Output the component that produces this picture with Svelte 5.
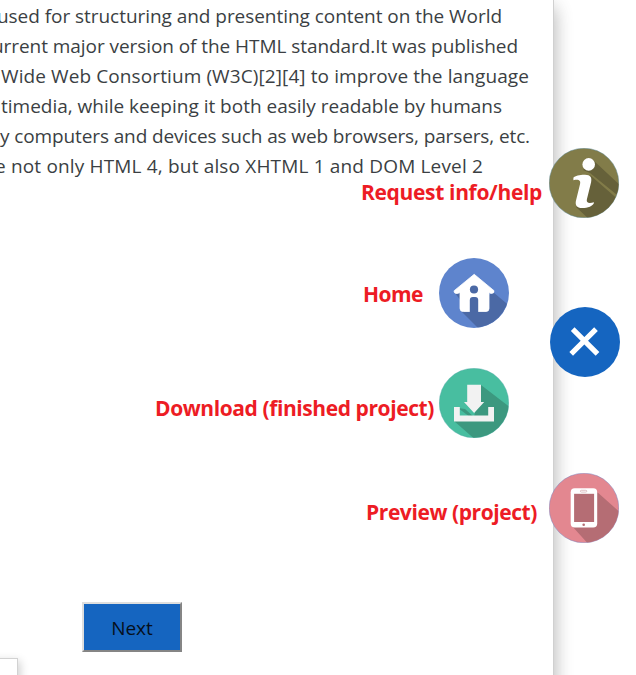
<script>
  const lines = [
    { text: 'used for structuring and presenting content on the World', start: -3, width: 505 },
    { text: 'urrent major version of the HTML standard.It was published', start: -8, width: 526 },
    { text: 'Wide Web Consortium (W3C)[2][4] to improve the language', start: 1, width: 528 },
    { text: 'timedia, while keeping it both easily readable by humans', start: 1, width: 501 },
    { text: 'y computers and devices such as web browsers, parsers, etc.', start: 0, width: 530 },
    { text: 'e not only HTML 4, but also XHTML 1 and DOM Level 2', start: -5, width: 488 }
  ];

  // Spreads the letters so that the run fills the given width.
  function fit(node, width) {
    const natural = node.getBoundingClientRect().width;
    node.style.letterSpacing = `${(width - natural) / node.textContent.length}px`;
  }
</script>

<main>
  <section class="panel">
    <div class="copy">
      {#each lines as line}
        <div class="line"><span style="margin-left: {line.start}px" use:fit={line.width}>{line.text}</span></div>
      {/each}
    </div>
    <button class="next">Next</button>
  </section>

  <div class="corner"></div>

  <nav>
    <div class="action info">
      <span class="label" use:fit={181}>Request info/help</span>
      <svg viewBox="0 0 70 70">
        <defs><clipPath id="disc"><circle cx="35" cy="35" r="34.7" /></clipPath></defs>
        <circle cx="35" cy="35" r="34.8" fill="#827c49" stroke="#5d8790" stroke-width=".5" />
        <g clip-path="url(#disc)" fill="#66613a">
          <path d="M44 12 72 38V50L41 25 34 22Z" />
          <path d="M41 27 72 54V74H43L27 59 36 52Z" />
        </g>
        <circle cx="39.7" cy="16.4" r="6.3" fill="#fff" />
        <path d="M24.4 29.8C26 27.4 31.5 26.6 36 26.7C41.6 26.9 43.1 29.5 42.1 34.2L37.9 51.3C37 55 40 56 45 54.3C44.7 58.4 37.8 60.2 33.3 60.1C27.4 60 26 57 27 52.5L31 36.2C32 32.6 30 31 24.4 32.2Z" fill="#fff" />
      </svg>
    </div>

    <div class="action home">
      <span class="label" use:fit={60}>Home</span>
      <svg viewBox="0 0 70 70">
        <circle cx="35" cy="35" r="35" fill="#5e84cd" />
        <g clip-path="url(#disc)" fill="#4b69a5">
          <path d="M16 35 22 35V43ZM54 34 74 51V74H43L22 53 50 52V37Z" />
        </g>
        <path d="M35.2 16.3 55 32.7Q55.5 35.6 52 35.4L50 34.5V50.5Q50 53.5 47 53.5H24.3Q21 53.5 21 50.4V34.5L18.5 35.5Q14.5 35.6 15.2 32.7Z" fill="#fff" stroke="#fff" stroke-width=".8" stroke-linejoin="round" />
        <circle cx="35" cy="31.5" r="4.1" fill="#4b69a5" />
        <path d="M30.8 54V42Q30.9 39 33.8 39H36.2Q39.2 39.1 39.2 42V54Z" fill="#4b69a5" />
      </svg>
    </div>

    <div class="action close">
      <svg viewBox="0 0 70 70">
        <circle cx="35" cy="35" r="35" fill="#1565c0" />
        <path d="M22.7 22.2 47.5 46.8M46 22.2 21.2 46.8" fill="none" stroke="#fff" stroke-width="5.2" />
      </svg>
    </div>

    <div class="action download">
      <span class="label" use:fit={279}>Download (finished project)</span>
      <svg viewBox="0 0 70 70">
        <circle cx="35" cy="35" r="34.8" fill="#48bea0" stroke="#58a8ac" stroke-width=".4" />
        <g clip-path="url(#disc)" fill="#3c987f">
          <path d="M42 17 72 40V74H39L15 53 31 49 19 40 26 41 35 49Z" />
        </g>
        <path d="M21 39V48H26L19 42Z" fill="#48bea0" />
        <path d="M28.2 16.8H42V34H45.2L35.1 45.1 25 34H28.2Z" fill="#f2f2f2" />
        <path d="M15 39H20.8V47.6H49.2V39H55V53.6H15Z" fill="#f2f2f2" />
      </svg>
    </div>

    <div class="action preview">
      <span class="label" use:fit={171}>Preview (project)</span>
      <svg viewBox="0 0 70 70">
        <circle cx="35" cy="35" r="34.8" fill="#e38790" stroke="#7a80bd" stroke-width=".5" />
        <g clip-path="url(#disc)" fill="#b56d74">
          <path d="M47 18 74 42V74H42L23 53 45 52Z" />
        </g>
        <rect x="21.7" y="15.2" width="26.5" height="39.3" rx="4" fill="#fff" />
        <rect x="25.1" y="20.8" width="20" height="28.2" fill="#b56d74" />
        <rect x="31.4" y="17.3" width="6.4" height="1.8" rx=".9" fill="#fff" stroke="#d3a9ad" stroke-width=".7" />
        <circle cx="34.7" cy="51.7" r="1.3" fill="#b56d74" />
      </svg>
    </div>
  </nav>
</main>

<style>
  :global(body) {
    margin: 0;
    background: #fff;
    overflow: hidden;
  }

  main {
    position: relative;
    height: 675px;
    overflow: hidden;
    font-family: 'Open Sans', 'Noto Sans', sans-serif;
  }

  .panel {
    box-sizing: border-box;
    width: 554px;
    height: 700px;
    padding-top: 1px;
    background: #fff;
    border-right: 1px solid #d0d0d0;
    box-shadow: 0 8px 17px rgba(0, 0, 0, 0.2), 0 6px 20px rgba(0, 0, 0, 0.13);
  }

  .copy {
    height: 601px;
    color: #3b3f43;
    font-size: 19px;
    line-height: 30px;
  }

  .line {
    height: 30px;
    white-space: nowrap;
  }

  .line span {
    display: inline-block;
  }

  .next {
    display: block;
    width: 100px;
    height: 50px;
    margin-left: 82px;
    padding: 2px 0 0;
    border: 2px solid;
    border-color: #dedede #858585 #858585 #dedede;
    background: #1565c0;
    color: #06101b;
    font: 19px 'Open Sans', sans-serif;
  }

  .corner {
    position: absolute;
    left: -21px;
    top: 658px;
    width: 37px;
    height: 30px;
    background: #fff;
    border: 1px solid #d2d2d2;
    box-shadow: 2px 3px 10px rgba(0, 0, 0, 0.2);
  }

  .action {
    position: absolute;
    display: flex;
    align-items: center;
    justify-content: flex-end;
  }

  .action svg {
    flex: none;
    width: 70px;
    height: 70px;
  }

  .label {
    color: #ed1c24;
    font: 700 21px/30px 'Open Sans', sans-serif;
    white-space: nowrap;
  }

  .info { right: 17px; top: 148px; }
  .info .label { margin: 18px 7px 0 0; }
  .home { right: 127px; top: 258px; }
  .home .label { margin: 2px 16px 0 0; }
  .close { right: 16px; top: 307px; }
  .download { right: 127px; top: 368px; }
  .download .label { margin: 10px 5px 0 0; }
  .preview { right: 17px; top: 473px; }
  .preview .label { margin: 8px 12px 0 0; }
</style>
